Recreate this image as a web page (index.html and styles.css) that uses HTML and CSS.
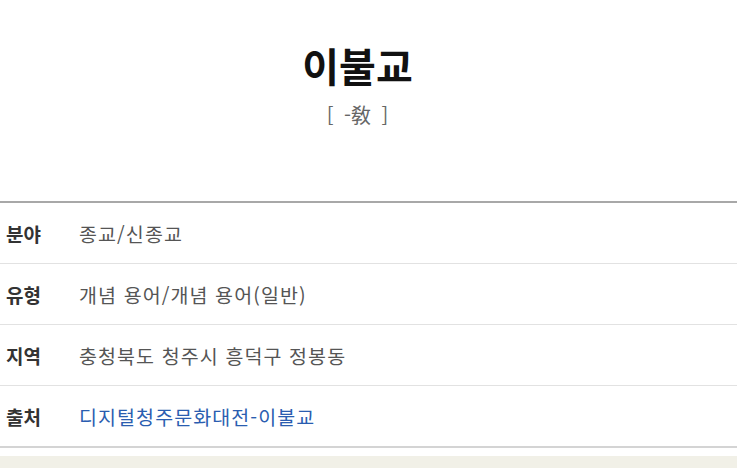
FILE: index.html
```html
<!DOCTYPE html>
<html lang="ko">
<head>
<meta charset="utf-8">
<link rel="stylesheet" href="styles.css">
</head>
<body>
<div class="page">
  <header class="head">
    <h1 class="title">이불교</h1>
    <p class="hanja">[ -敎 ]</p>
  </header>
  <div class="info">
    <div class="row"><span class="label">분야</span><span class="value">종교/신종교</span></div>
    <div class="row"><span class="label">유형</span><span class="value">개념 용어/개념 용어(일반)</span></div>
    <div class="row"><span class="label">지역</span><span class="value">충청북도 청주시 흥덕구 정봉동</span></div>
    <div class="row"><span class="label">출처</span><a class="value link" href="#">디지털청주문화대전-이불교</a></div>
  </div>
  <div class="foot"></div>
</div>
</body>
</html>
```
FILE: styles.css
```css
html, body {
  margin: 0;
  padding: 0;
  background: #ffffff;
}
body {
  font-family: "Noto Sans CJK KR", "Noto Sans", sans-serif;
  color: #333;
  height: 468px;
  overflow: hidden;
}
.page {
  display: flex;
  flex-direction: column;
  height: 468px;
}
.head {
  display: flex;
  flex-direction: column;
  align-items: center;
  padding: 41px 22px 0 0;
  height: 158px;
  box-sizing: border-box;
}
.title {
  margin: 0;
  font-size: 40px;
  line-height: 48px;
  font-weight: 700;
  color: #111;
}
.hanja {
  margin: 14px 0 0;
  font-size: 20px;
  line-height: 24px;
  word-spacing: 5px;
  color: #666;
}
.info {
  margin-top: 43px;
  border-top: 2px solid #a8a8a8;
  border-bottom: 2px solid #d4d4d4;
}
.row {
  display: flex;
  align-items: center;
  height: 60px;
  padding-left: 6px;
  border-bottom: 1px solid #e2e2e2;
}
.row:last-child {
  border-bottom: none;
}
.label {
  width: 73px;
  flex: none;
  font-size: 19px;
  font-weight: 700;
  color: #333;
}
.value {
  font-size: 19.5px;
  letter-spacing: 1.1px;
  color: #555;
}
.link {
  color: #2a5db0;
  text-decoration: none;
}
.foot {
  margin-top: 8px;
  flex: 1;
  background: #f1f0e7;
}
```
